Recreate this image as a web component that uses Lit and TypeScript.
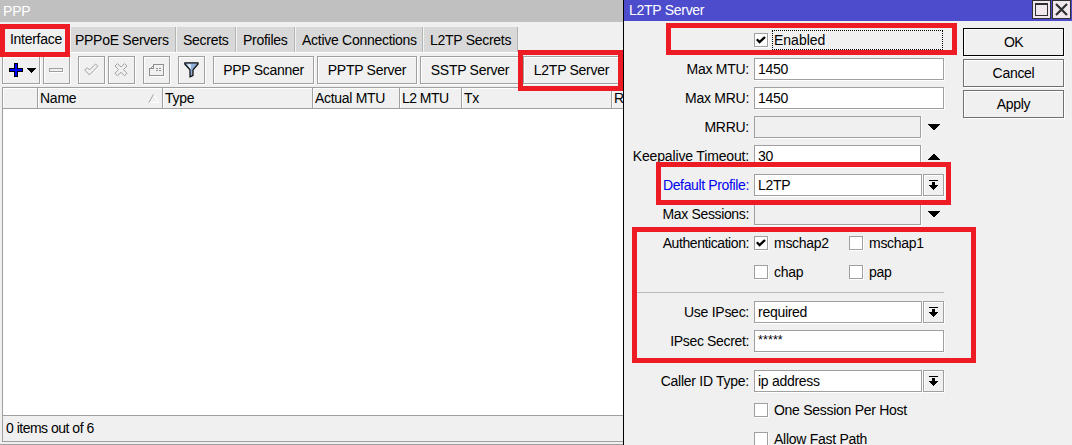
import { LitElement, html, css, svg, nothing } from "lit";
import { customElement } from "lit/decorators.js";

const box = (w: number, h: number, body: unknown) => html`<svg
  width=${w} height=${h} viewBox="0 0 ${w} ${h}" shape-rendering="crispEdges">${body}</svg>`;

const icons = {
  plus: box(14, 14, svg`<path fill="#000" d="M5 0h4v5h5v4h-5v5h-4v-5h-5v-4h5z"/><path fill="#00f" d="M6 1h2v5h5v2h-5v5h-2v-5h-5v-2h5z"/>`),
  caret: box(9, 5, svg`<path d="M0 0h9v1h-1v1h-1v1h-1v1h-1v1h-1v-1h-1v-1h-1v-1h-1v-1h-1z"/>`),
  minus: box(15, 5, svg`<path fill="#fff" d="M1 1h14v4h-14z"/><path fill="#f0f0f0" stroke="#a0a0a0" d="M.5 .5h13v3h-13z"/>`),
  check: html`<svg width="15" height="14" viewBox="0 0 15 14"><path fill="none" stroke="#fff" d="M2 8l3-2 2 2 6-6 2 2-8 8z"/><path fill="#f0f0f0" stroke="#a0a0a0" d="M.8 7l2.4-2.4L5.5 7l6-6L14 3.3 5.5 12z"/></svg>`,
  cross: html`<svg width="15" height="14" viewBox="0 0 15 14"><path fill="#f0f0f0" stroke="#a0a0a0" d="M3.5 .7L7 4 10.5 .7 13 3 9.4 6.5 13 10.3 10.5 12.7 7 9.3 3.5 12.7 1 10.3 4.5 6.5 1 3z"/></svg>`,
  note: box(16, 13, svg`<path fill="none" stroke="#fff" d="M1.5 12.5h14v-10"/><path fill="none" stroke="#909090" d="M4.5 .5h10v11h-14v-7h4zM3.5 1.5v1M2.5 2.5v1M1.5 3.5v1M7 4.5h2M10 4.5h2M7 6.5h2M10 6.5h2"/>`),
  funnel: html`<svg width="15" height="16" viewBox="0 0 15 16"><path fill="#8fb0d8" stroke="#111" stroke-width="1.3" stroke-linejoin="round" d="M.8 .8h13.2v1.2L9 7.8v5.6l-3 1.6V7.8L.8 2z"/><path fill="#e4eefa" d="M3 2.3h4l-.2 9V7.5z"/></svg>`,
  sort: html`<svg width="11" height="9" viewBox="0 0 11 9"><path fill="none" stroke="#fff" d="M6 .5l4.3 8H1"/><path fill="none" stroke="#a0a0a0" d="M5.5 .3L.9 8.5"/></svg>`,
  down: box(12, 6, svg`<path d="M0 0h12v1h-1v1h-1v1h-1v1h-1v1h-1v1h-2v-1h-1v-1h-1v-1h-1v-1h-1v-1h-1z"/>`),
  up: box(12, 6, svg`<path d="M5 0h2v1h1v1h1v1h1v1h1v1h1v1h-12v-1h1v-1h1v-1h1v-1h1v-1h1z"/>`),
  drop: box(9, 10, svg`<path d="M0 0h9v1h-9zM3 2h3v3h3v1h-1v1h-1v1h-1v1h-1v1h-1v-1h-1v-1h-1v-1h-1v-1h-1v-1h3z"/>`),
  tick: html`<svg width="10" height="9" viewBox="0 0 10 9"><path fill="none" stroke="#000" stroke-width="2.3" d="M.8 3.2L3.6 6.2 9 1"/></svg>`,
  max: box(13, 13, svg`<path fill="none" stroke="#303030" d="M.5 .5h12v12h-12zM0 1.5h13"/>`),
  close: html`<svg width="13" height="13" viewBox="0 0 13 13"><path fill="none" stroke="#303030" stroke-width="2.2" d="M1 1l11 11M12 1L1 12"/></svg>`,
};

const base = css`
  :host, * { box-sizing: border-box; }
  svg { display: block; flex: none; }
  .btn {
    display: flex; align-items: center; justify-content: center;
    border: 1px solid #a0a0a0; background: #f0f0f0; flex: none;
    box-shadow: inset 1px 1px #fff, 1px 1px #fff;
  }
`;

@customElement("ppp-window")
class PppWindow extends LitElement {
  static styles = [base, css`
    :host { display: flex; flex-direction: column; width: 623px; height: 445px; flex: none; background: #f0f0f0; overflow: hidden; }
    .title { height: 22px; flex: none; background: #c0c0c0; color: #fff; padding: 0 3px; line-height: 22px; letter-spacing: -.2px; }
    .tabs { display: flex; height: 31px; padding-top: 5px; flex: none; border-bottom: 1px solid #fff; }
    .tab { background: #d8d8d8; border-right: 1px solid #b4b4b4; box-shadow: inset 1px 0 #f4f4f4; line-height: 27px; padding-left: 5px; white-space: nowrap; }
    .tab + .tab + .tab { padding-left: 7px; }
    .tab.active { background: #f0f0f0; line-height: 24px; border: 0; box-shadow: none; padding-left: 10px; }
    .tools { display: flex; padding: 3px 0 0 2px; height: 34px; flex: none; }
    .btn { height: 28px; margin-right: 3px; }
    .group { margin-right: 8px; }
    .add { gap: 4px; padding-left: 2px; }
    .head { display: flex; height: 22px; flex: none; margin-left: 2px; border: 1px solid #a0a0a0; border-right: 0; }
    .cell { flex: none; border-right: 1px solid #a0a0a0; box-shadow: inset 1px 1px #fff; padding: 0 3px 0 2px; line-height: 21px; display: flex; align-items: center; justify-content: space-between; white-space: nowrap; }
    .cell:last-child { border-right: 0; }
    .list { height: 306px; flex: none; margin-left: 2px; background: #fff; border-left: 1px solid #a0a0a0; }
    .status { height: 27px; flex: none; margin-left: 2px; border: 1px solid #a0a0a0; border-right: 0; padding-left: 3px; line-height: 24px; letter-spacing: -.5px; }
    .edge { height: 1px; margin-top: 2px; background: #a0a0a0; }
  `];
  tabs: [string, number][] = [
    ["Interface", 70], ["PPPoE Servers", 106], ["Secrets", 60],
    ["Profiles", 59], ["Active Connections", 128], ["L2TP Secrets", 95],
  ];
  columns: [string, number, number][] = [
    ["", 35, 0], ["Name", 125, -.25], ["Type", 150, -.25], ["Actual MTU", 87, -.3], ["L2 MTU", 62, -.55], ["Tx", 150, -.25], ["R", 20, 0],
  ];
  render() {
    return html`
      <div class="title">PPP</div>
      <div class="tabs">${this.tabs.map(([t, w], i) => html`<div class="tab ${i ? "" : "active"}" style="width:${w}px">${t}</div>`)}</div>
      <div class="tools">
        <div class="btn add" style="width:38px">${icons.plus}${icons.caret}</div>
        <div class="btn group" style="width:27px">${icons.minus}</div>
        <div class="btn" style="width:27px">${icons.check}</div>
        <div class="btn group" style="width:27px">${icons.cross}</div>
        <div class="btn group" style="width:27px">${icons.note}</div>
        <div class="btn group" style="width:27px">${icons.funnel}</div>
        <div class="btn" style="width:101px">PPP Scanner</div>
        <div class="btn" style="width:100px">PPTP Server</div>
        <div class="btn" style="width:100px">SSTP Server</div>
        <div class="btn" style="width:97px">L2TP Server</div>
      </div>
      <div class="head">${this.columns.map(([t, w, s]) => html`<div class="cell" style="width:${w}px;letter-spacing:${s}px">${t}${t === "Name" ? icons.sort : nothing}</div>`)}</div>
      <div class="list"></div>
      <div class="status">0 items out of 6</div>
      <div class="edge"></div>`;
  }
}

@customElement("l2tp-dialog")
class L2tpDialog extends LitElement {
  static styles = [base, css`
    :host { display: flex; flex-direction: column; width: 449px; height: 445px; flex: none; background: #f0f0f0; border-left: 1px solid #000; overflow: hidden; }
    .title { display: flex; height: 21px; flex: none; background: #4c4ccc; color: #fff; padding-left: 5px; line-height: 21px; }
    .name { flex: 1; }
    .ctl { display: flex; width: 19px; height: 19px; border: 1px solid #303030; margin-right: 1px; align-items: center; justify-content: center; background: #f0e8ee; }
    .body { display: flex; padding-top: 5px; }
    .form { width: 320px; flex: none; }
    .row { display: flex; height: 29px; padding-top: 3px; }
    .label { width: 125px; margin-right: 5px; text-align: right; line-height: 23px; white-space: nowrap; flex: none; }
    .link { color: #0000f0; }
    .input { width: 190px; height: 22px; border: 1px solid #a0a0a0; background: #fff; padding-left: 3px; line-height: 21px; box-shadow: 1px 1px #fff; flex: none; }
    .input.drop { width: 168px; margin-right: 1px; }
    .input.spin { width: 167px; }
    .input.off { background: #f0f0f0; }
    .input.secret { font-size: 12.5px; letter-spacing: .1px; line-height: 19px; }
    .btn.pick { width: 21px; height: 22px; }
    .spinner { margin: 8px 0 0 7px; }
    .spinner.raised { margin-top: 9px; }
    .opt { display: flex; flex: none; height: 22px; width: 95px; }
    .opt.wide { width: 190px; }
    .check { width: 14px; height: 14px; margin: 4px 4px 0 0; border: 1px solid #a0a0a0; background: #fff; padding: 2px 1px; box-shadow: 1px 1px #fff; flex: none; }
    .text { line-height: 23px; padding-left: 2px; white-space: nowrap; }
    .text.focus { width: 171px; height: 20px; margin-top: 1px; border: 1px dotted #000; line-height: 19px; padding-left: 1px; letter-spacing: 0; }
    .rule { height: 1px; margin: 5px 0 5px 13px; background: #b8b8b8; }
    .actions { display: flex; flex-direction: column; gap: 3px; margin: 2px 0 0 19px; }
    .action { width: 101px; height: 28px; border-color: #707070; }
    .action.main { border-color: #000; letter-spacing: -.7px; }
  `];
  label(t: string, s = -.27, link = false) {
    return html`<div class="label ${link ? "link" : ""}"><span style="letter-spacing:${s}px">${t}</span></div>`;
  }
  opt(t: string, on = false, cls = "", focus = "") {
    return html`<div class="opt ${cls}"><div class="check">${on ? icons.tick : nothing}</div><div class="text ${focus}">${t}</div></div>`;
  }
  plain(l: string, v: string, cls = "", s = -.27) {
    return html`<div class="row">${this.label(l, s)}<div class="input ${cls}">${v}</div></div>`;
  }
  drop(l: string, v: string, s = -.27, link = false) {
    return html`<div class="row">${this.label(l, s, link)}<div class="input drop">${v}</div><div class="btn pick">${icons.drop}</div></div>`;
  }
  spin(l: string, v: string, icon: unknown, s = -.27) {
    return html`<div class="row">${this.label(l, s)}<div class="input spin ${v ? "" : "off"}">${v}</div><div class="spinner ${v ? "raised" : ""}">${icon}</div></div>`;
  }
  render() {
    return html`
      <div class="title"><div class="name">L2TP Server</div><div class="ctl">${icons.max}</div><div class="ctl">${icons.close}</div></div>
      <div class="body">
        <div class="form">
          <div class="row">${this.label("")}${this.opt("Enabled", true, "wide", "focus")}</div>
          ${this.plain("Max MTU:", "1450")}
          ${this.plain("Max MRU:", "1450")}
          ${this.spin("MRRU:", "", icons.down)}
          ${this.spin("Keepalive Timeout:", "30", icons.up, -.16)}
          ${this.drop("Default Profile:", "L2TP", -.36, true)}
          ${this.spin("Max Sessions:", "", icons.down, -.35)}
          <div class="row">${this.label("Authentication:", -.42)}${this.opt("mschap2", true)}${this.opt("mschap1")}</div>
          <div class="row">${this.label("")}${this.opt("chap")}${this.opt("pap")}</div>
          <div class="rule"></div>
          ${this.drop("Use IPsec:", "required")}
          ${this.plain("IPsec Secret:", "*****", "secret", -.35)}
          <div class="rule"></div>
          ${this.drop("Caller ID Type:", "ip address")}
          <div class="row">${this.label("")}${this.opt("One Session Per Host", false, "wide")}</div>
          <div class="row">${this.label("")}${this.opt("Allow Fast Path", false, "wide")}</div>
        </div>
        <div class="actions">
          <div class="btn action main">OK</div>
          <div class="btn action">Cancel</div>
          <div class="btn action">Apply</div>
        </div>
      </div>`;
  }
}

@customElement("app-root")
class AppRoot extends LitElement {
  static styles = css`
    :host { display: flex; position: relative; width: 1072px; height: 445px; overflow: hidden; color: #000; font: 14px "Liberation Sans", Arial, sans-serif; letter-spacing: -.28px; }
    .mark { position: absolute; box-sizing: border-box; border: 5px solid #ed1c24; }
    .tab { left: 0; top: 24px; width: 70px; height: 33px; }
    .server { left: 518px; top: 50px; width: 105px; height: 41px; }
    .enabled { left: 666px; top: 23px; width: 291px; height: 32px; }
    .profile { left: 656px; top: 162px; width: 295px; height: 43px; }
    .auth { left: 632px; top: 227px; width: 344px; height: 136px; }
  `;
  render() {
    return html`<ppp-window></ppp-window><l2tp-dialog></l2tp-dialog>
      ${["tab", "server", "enabled", "profile", "auth"].map((m) => html`<div class="mark ${m}"></div>`)}`;
  }
}
